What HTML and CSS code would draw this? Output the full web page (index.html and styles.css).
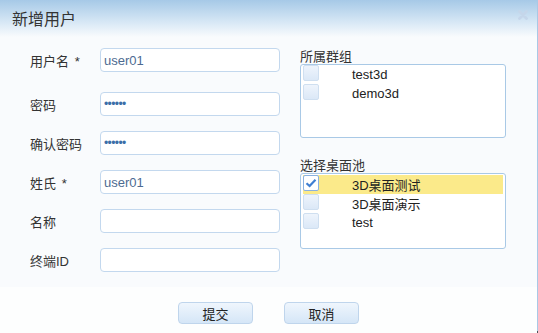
FILE: index.html
```html
<!DOCTYPE html>
<html lang="zh-CN">
<head>
    <meta charset="UTF-8">
    <title>新增用户</title>
    <link rel="stylesheet" href="styles.css">
</head>
<body>
    <div class="dialog">
        <div class="dialog-header">
            <span class="dialog-title">新增用户</span>
            <svg class="close" width="10" height="10" viewBox="0 0 10 10">
                <path d="M1.5 1.5 L8.5 8.5 M8.5 1.5 L1.5 8.5" stroke="#c5d6ea" stroke-width="2.8" stroke-linecap="round"/>
            </svg>
        </div>
        <div class="dialog-body">
            <div class="form">
                <div class="row">
                    <label>用户名 <span class="star">*</span></label>
                    <input class="field" type="text" value="user01">
                </div>
                <div class="row row-second">
                    <label>密码</label>
                    <input class="field pwd" type="password" value="123456">
                </div>
                <div class="row">
                    <label>确认密码</label>
                    <input class="field pwd" type="password" value="123456">
                </div>
                <div class="row">
                    <label>姓氏 <span class="star">*</span></label>
                    <input class="field" type="text" value="user01">
                </div>
                <div class="row">
                    <label>名称</label>
                    <input class="field" type="text" value="">
                </div>
                <div class="row">
                    <label>终端ID</label>
                    <input class="field" type="text" value="">
                </div>
            </div>
            <div class="side">
                <div class="group-label">所属群组</div>
                <div class="list list-groups">
                    <div class="item"><span class="check"></span><span class="item-text">test3d</span></div>
                    <div class="item"><span class="check"></span><span class="item-text">demo3d</span></div>
                </div>
                <div class="group-label second">选择桌面池</div>
                <div class="list list-pools">
                    <div class="item selected">
                        <span class="check checked">
                            <svg width="12" height="10" viewBox="0 0 12 10">
                                <path d="M1.5 5.2 L4.6 8 L10.5 1.8" fill="none" stroke="#3f7fd2" stroke-width="2.2"/>
                            </svg>
                        </span>
                        <span class="item-text">3D桌面测试</span>
                    </div>
                    <div class="item"><span class="check"></span><span class="item-text">3D桌面演示</span></div>
                    <div class="item"><span class="check"></span><span class="item-text">test</span></div>
                </div>
            </div>
        </div>
        <div class="dialog-footer">
            <button class="btn">提交</button>
            <button class="btn">取消</button>
        </div>
    </div>
</body>
</html>
```

FILE: styles.css
```css
html, body {
    margin: 0;
    padding: 0;
    height: 100%;
    overflow: hidden;
    background: #4d5156;
}
body {
    font-family: "Liberation Sans", "Noto Sans CJK SC", sans-serif;
    font-size: 13px;
    color: #333;
}
.dialog {
    width: 537px;
    height: 329px;
    border-right: 1px solid #a9c9e6;
    border-bottom: 2px solid #a9c9e6;
    background: #f9fbfd;
    display: flex;
    flex-direction: column;
}
.dialog-header {
    height: 37px;
    flex-shrink: 0;
    display: flex;
    align-items: center;
    justify-content: space-between;
    padding: 0 9px 1px 12px;
    box-sizing: border-box;
    background: linear-gradient(to bottom, #a6c9e7 0%, #d3e5f4 55%, #f9fbfd 100%);
}
.dialog-title {
    font-size: 16px;
    color: #333;
}
.close {
    margin-top: -6px;
}
.dialog-body {
    flex: 1;
    display: flex;
}
.form {
    padding: 11px 0 0 30px;
    width: 270px;
}
.row {
    display: flex;
    align-items: center;
    height: 24px;
    margin-bottom: 15px;
}
.row-second {
    margin-top: 20px;
}
.row label {
    width: 70px;
    flex-shrink: 0;
    color: #333;
}
.star {
    color: #333;
    margin-left: 2px;
}
.field {
    width: 180px;
    height: 24px;
    box-sizing: border-box;
    border: 1px solid #c3d8ee;
    border-radius: 4px;
    background: #fff;
    padding: 0 3px;
    font-family: "Liberation Sans", sans-serif;
    font-size: 13px;
    color: #4d6b91;
    outline: none;
}
.pwd {
    font-size: 12px;
    color: #3b6ea8;
    letter-spacing: -0.6px;
}
.side {
    padding: 13px 0 0 0;
    width: 206px;
}
.group-label {
    line-height: 14px;
    color: #333;
}
.group-label.second {
    margin-top: 21px;
}
.list {
    width: 206px;
    box-sizing: border-box;
    border: 1px solid #a9c9e6;
    border-radius: 3px;
    background: #fff;
    padding: 0 2px;
}
.list-groups {
    height: 74px;
}
.list-pools {
    height: 76px;
    padding-top: 1px;
}
.item {
    height: 19px;
    display: flex;
    align-items: center;
}
.item.selected {
    background: #fbea8a;
}
.check {
    width: 16px;
    height: 16px;
    box-sizing: border-box;
    border: 1px solid #cfdff0;
    border-radius: 2px;
    background: linear-gradient(to bottom, #eef4fc, #dbe8f7);
    flex-shrink: 0;
    align-self: flex-start;
    display: flex;
    align-items: center;
    justify-content: center;
}
.check.checked {
    background: #fff;
    border-color: #8ab1e0;
}
.item-text {
    margin-left: 33px;
    color: #222;
}
.dialog-footer {
    height: 47px;
    flex-shrink: 0;
    background: #fdfefe;
    display: flex;
    justify-content: center;
    gap: 31px;
    padding-top: 15px;
    box-sizing: border-box;
}
.btn {
    width: 75px;
    height: 22px;
    border: 1px solid #bfd5ec;
    border-radius: 4px;
    background: linear-gradient(to bottom, #eff6fd 0%, #e2eefa 50%, #d5e6f7 100%);
    font-family: "Liberation Sans", "Noto Sans CJK SC", sans-serif;
    font-size: 13px;
    color: #222;
    padding: 0;
}
```
